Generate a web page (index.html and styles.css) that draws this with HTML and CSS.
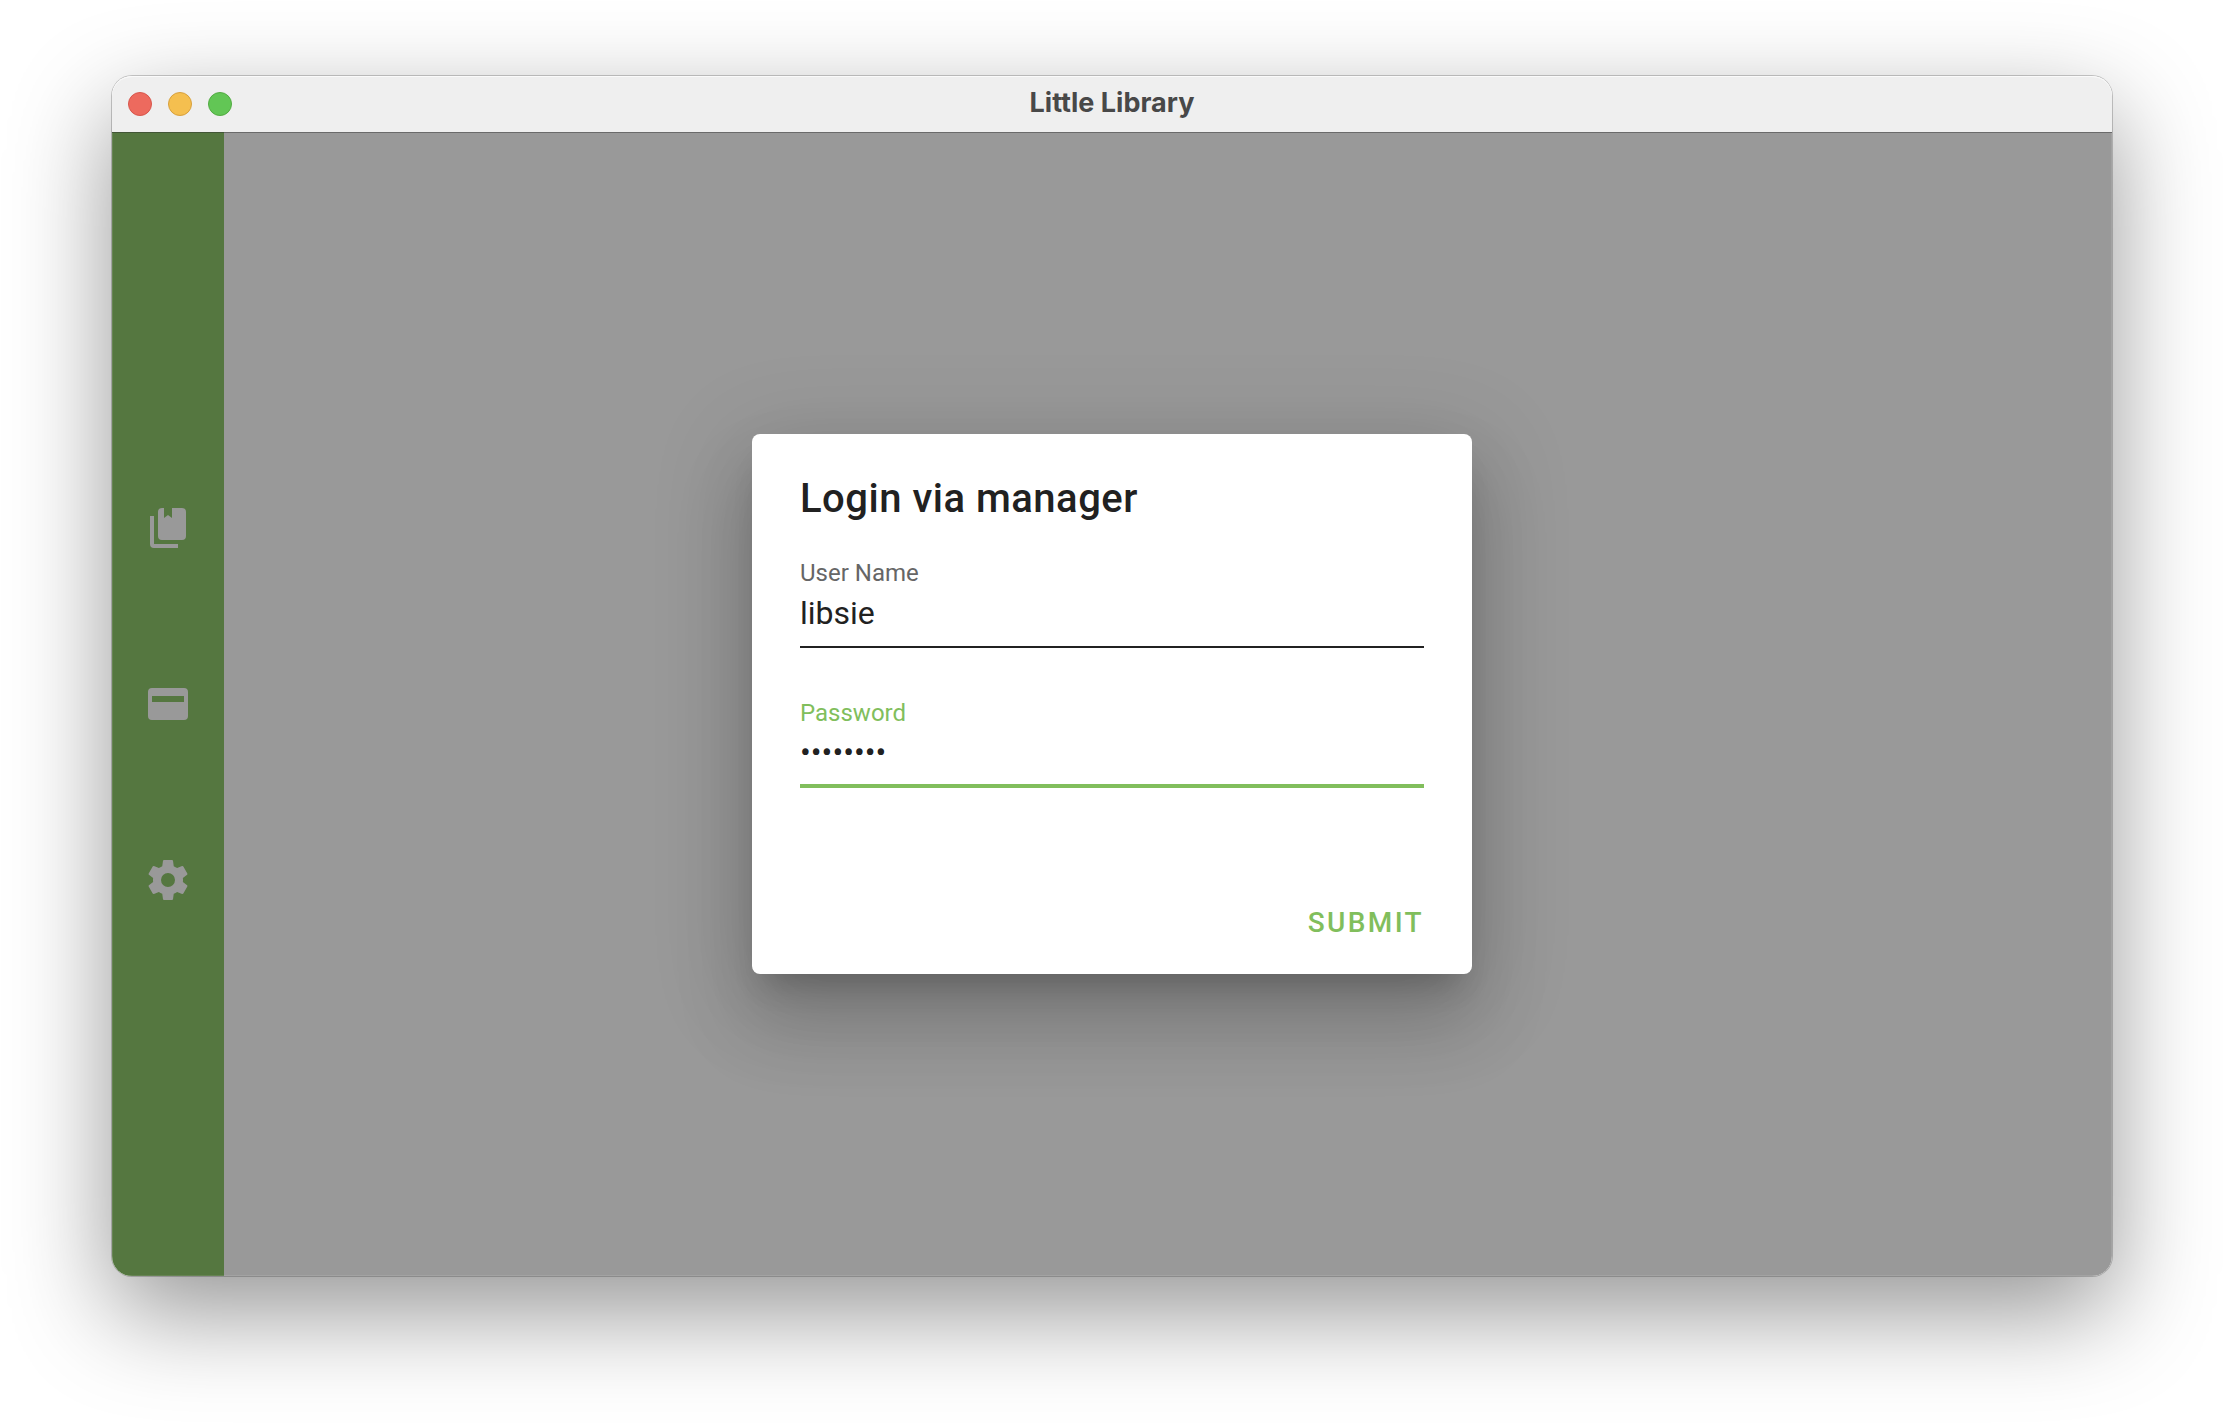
FILE: index.html
```html
<!DOCTYPE html>
<html lang="en">
<head>
<meta charset="utf-8">
<meta name="viewport" content="width=device-width, initial-scale=1">
<title>Little Library</title>
<link rel="stylesheet" href="styles.css">
</head>
<body>
<div class="window">
  <header class="titlebar">
    <div class="controls">
      <button class="control control-close" type="button" aria-label="Close"></button>
      <button class="control control-minimize" type="button" aria-label="Minimize"></button>
      <button class="control control-zoom" type="button" aria-label="Zoom"></button>
    </div>
    <h1 class="window-title">Little Library</h1>
  </header>
  <div class="content">
    <nav class="sidebar">
      <button class="nav-button" type="button" aria-label="Books">
        <svg class="icon" viewBox="0 0 24 24"><path d="M3 6h2v14h12v2H5a2 2 0 0 1-2-2zM9 2h1v5l2-1.500 2 1.500V2h5a2 2 0 0 1 2 2v12a2 2 0 0 1-2 2H9a2 2 0 0 1-2-2V4a2 2 0 0 1 2-2z"/></svg>
      </button>
      <button class="nav-button" type="button" aria-label="Cards">
        <svg class="icon" viewBox="0 0 24 24"><path fill-rule="evenodd" d="M4 4h16a2 2 0 0 1 2 2v12a2 2 0 0 1-2 2H4a2 2 0 0 1-2-2V6a2 2 0 0 1 2-2zm0 4v3h16V8z"/></svg>
      </button>
      <button class="nav-button" type="button" aria-label="Settings">
        <svg class="icon" viewBox="0 0 24 24"><path d="M12,15.5A3.5,3.5 0 0,1 8.5,12A3.5,3.5 0 0,1 12,8.5A3.5,3.5 0 0,1 15.5,12A3.5,3.5 0 0,1 12,15.5M19.43,12.97C19.47,12.65 19.5,12.33 19.5,12C19.5,11.67 19.47,11.34 19.43,11L21.54,9.37C21.73,9.22 21.78,8.95 21.66,8.73L19.66,5.27C19.54,5.05 19.27,4.96 19.05,5.05L16.56,6.05C16.04,5.66 15.5,5.32 14.87,5.07L14.5,2.42C14.46,2.18 14.25,2 14,2H10C9.75,2 9.54,2.18 9.5,2.42L9.13,5.07C8.5,5.32 7.96,5.66 7.44,6.05L4.95,5.05C4.73,4.96 4.46,5.05 4.34,5.27L2.34,8.73C2.21,8.95 2.27,9.22 2.46,9.37L4.57,11C4.53,11.34 4.5,11.67 4.5,12C4.5,12.33 4.53,12.65 4.57,12.97L2.46,14.63C2.27,14.78 2.21,15.05 2.34,15.27L4.34,18.73C4.46,18.95 4.73,19.03 4.95,18.95L7.44,17.94C7.96,18.34 8.5,18.68 9.13,18.93L9.5,21.58C9.54,21.82 9.75,22 10,22H14C14.25,22 14.46,21.82 14.5,21.58L14.87,18.93C15.5,18.67 16.04,18.34 16.56,17.94L19.05,18.95C19.27,19.03 19.54,18.95 19.66,18.73L21.66,15.27C21.78,15.05 21.73,14.78 21.54,14.63L19.43,12.97Z"/></svg>
      </button>
    </nav>
    <div class="scrim">
      <form class="dialog" role="dialog" aria-labelledby="dialog-title">
        <h2 class="dialog-title" id="dialog-title">Login via manager</h2>
        <div class="fields">
          <div class="field">
            <label class="label" for="username">User Name</label>
            <input class="input" id="username" type="text" value="libsie" autocomplete="username">
          </div>
          <div class="field field-active">
            <label class="label" for="password">Password</label>
            <input class="input" id="password" type="password" value="password" autocomplete="current-password">
          </div>
        </div>
        <button class="submit" type="button">SUBMIT</button>
      </form>
    </div>
  </div>
</div>
</body>
</html>
```
FILE: styles.css
```css
* {
  box-sizing: border-box;
}

body {
  margin: 0;
  min-height: 100vh;
  display: flex;
  padding: 76px 112px 148px;
  background: #fff;
  font-family: Roboto, "Liberation Sans", sans-serif;
  color: #212121;
}

button {
  border: 0;
  padding: 0;
  background: none;
  font-family: inherit;
}

.window {
  flex: 1;
  display: flex;
  flex-direction: column;
  border-radius: 20px;
  box-shadow:
    0 0 0 1px rgba(0, 0, 0, 0.2),
    0 36px 100px rgba(0, 0, 0, 0.42);
}

.titlebar {
  display: grid;
  grid-template-columns: 1fr auto 1fr;
  align-items: center;
  height: 56px;
  padding: 0 16px;
  border-radius: 20px 20px 0 0;
  background: #efefef;
  box-shadow: inset 0 1px #fafafa;
}

.controls {
  display: flex;
  gap: 16px;
}

.control {
  width: 24px;
  height: 24px;
  border: 1px solid;
  border-radius: 50%;
}

.control-close {
  background: #ed6a5e;
  border-color: #d8564c;
}

.control-minimize {
  background: #f5bf4f;
  border-color: #d8a03d;
}

.control-zoom {
  background: #62c655;
  border-color: #52ab42;
}

.window-title {
  margin: 0;
  padding-bottom: 2px;
  font: 700 27px/32px Inter, sans-serif;
  color: #484848;
}

.content {
  position: relative;
  flex: 1;
  display: flex;
  border-radius: 0 0 20px 20px;
  overflow: hidden;
  background: #fff;
}

.sidebar {
  width: 112px;
  display: flex;
  flex-direction: column;
  align-items: center;
  justify-content: center;
  gap: 128px;
  background: #8ec66c;
}

.nav-button,
.icon {
  display: block;
  width: 48px;
  height: 48px;
}

.icon {
  fill: #fff;
}

.scrim {
  position: absolute;
  inset: 0;
  display: flex;
  align-items: center;
  justify-content: center;
  background: rgba(0, 0, 0, 0.4);
  box-shadow: inset 0 1px rgba(0, 0, 0, 0.35), inset 0 0 0 1px rgba(255, 255, 255, 0.1);
}

.dialog {
  display: flex;
  flex-direction: column;
  width: 720px;
  max-width: 90%;
  padding: 41px 48px 35px;
  border-radius: 8px;
  background: #fff;
  box-shadow:
    0 22px 30px -14px rgba(0, 0, 0, 0.2),
    0 48px 76px 6px rgba(0, 0, 0, 0.14),
    0 18px 92px 16px rgba(0, 0, 0, 0.12);
}

.dialog-title {
  margin: 0 0 36px;
  font-size: 40px;
  line-height: 48px;
  font-weight: 500;
  letter-spacing: 0.0125em;
}

.fields {
  display: flex;
  flex-direction: column;
  gap: 51px;
}

.field {
  display: flex;
  flex-direction: column;
  gap: 5px;
}

.label {
  font-size: 24px;
  line-height: 28px;
  color: #666;
}

.input {
  width: 100%;
  height: 56px;
  padding: 0 0 12px;
  border: 0;
  border-bottom: 2px solid #212121;
  outline: 0;
  background: none;
  font: 400 32px/40px Roboto, sans-serif;
  color: #212121;
}

.field-active .label {
  color: #81be5c;
}

.field-active .input {
  border-bottom: 4px solid #81be5c;
}

.submit {
  align-self: flex-end;
  margin-top: 119px;
  font-size: 28px;
  line-height: 32px;
  font-weight: 500;
  letter-spacing: 0.085em;
  color: #81be5c;
}
```
